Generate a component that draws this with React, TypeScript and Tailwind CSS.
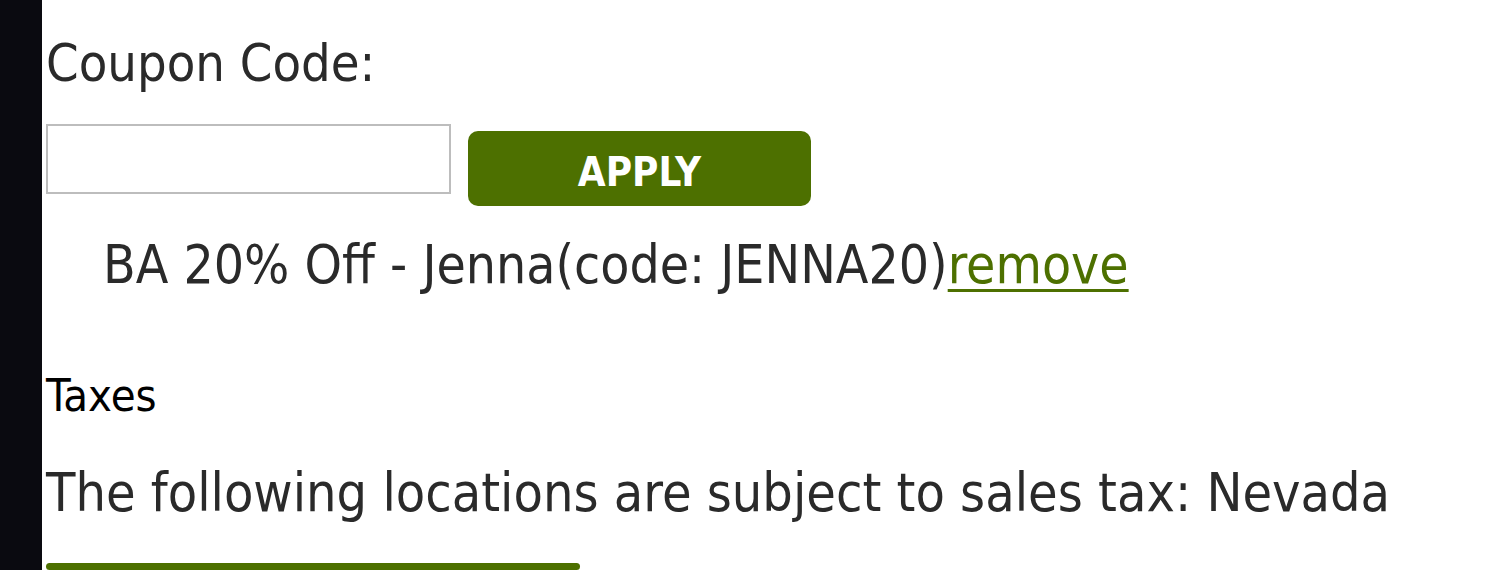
export default function App() {
  return (
    <div className="flex h-[570px] w-[1500px] overflow-hidden bg-white font-['DejaVu_Sans_Condensed',sans-serif]">
      <div className="w-[42px] shrink-0 bg-[#0a0a10]" />
      <div className="flex flex-col pl-[4px] pt-[30px]">
        <div className="text-[52px] leading-[66px] text-[#2a2a2a]">Coupon Code:</div>
        <div className="mt-[28px] flex items-start gap-[17px]">
          <input className="h-[70px] w-[405px] border-2 border-[#bdbdbd] bg-white" />
          <button className="mt-[7px] h-[75px] w-[343px] rounded-[10px] bg-[#4d7000] pt-[6px] text-[40px] font-bold text-white">
            APPLY
          </button>
        </div>
        <div className="mt-[26px] pl-[57px] text-[53px] leading-[66px] text-[#2a2a2a]">
          BA 20% Off - Jenna(code: JENNA20)
          <a href="#" className="text-[#4d7000] underline decoration-[3px] underline-offset-[6px]">
            remove
          </a>
        </div>
        <div className="mt-[71px] text-[45px] leading-[54px] text-black">Taxes</div>
        <div className="mt-[39px] text-[53.5px] leading-[62px] text-[#2a2a2a]">
          The following locations are subject to sales tax: Nevada
        </div>
        <div className="mt-[39px] h-[60px] w-[534px] rounded-[10px] bg-[#4d7000]" />
      </div>
    </div>
  )
}
